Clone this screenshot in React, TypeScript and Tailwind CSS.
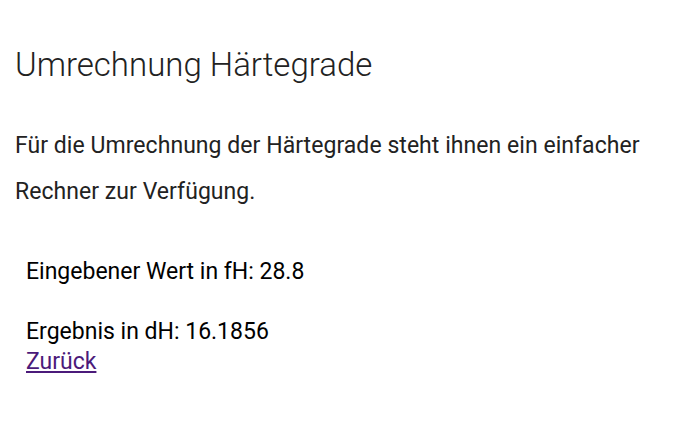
export default function App() {
  return (
    <div className="min-h-screen bg-white px-[15px] font-['Roboto',sans-serif] text-[#222]">
      <h1 className="pt-[45px] text-[33px] font-light leading-[40px]">Umrechnung Härtegrade</h1>
      <p className="mt-[38px] text-[23px] leading-[46px] tracking-[0.05px]">
        Für die Umrechnung der Härtegrade steht ihnen ein einfacher Rechner zur Verfügung.
      </p>
      <div className="mt-[42px] pl-[11px] text-[23px] leading-[30px] text-black">
        <p>Eingebener Wert in fH: 28.8</p>
        <p className="mt-[30px]">Ergebnis in dH: 16.1856</p>
        <a href="#" className="text-[#4b1a7a] underline">Zurück</a>
      </div>
    </div>
  );
}
